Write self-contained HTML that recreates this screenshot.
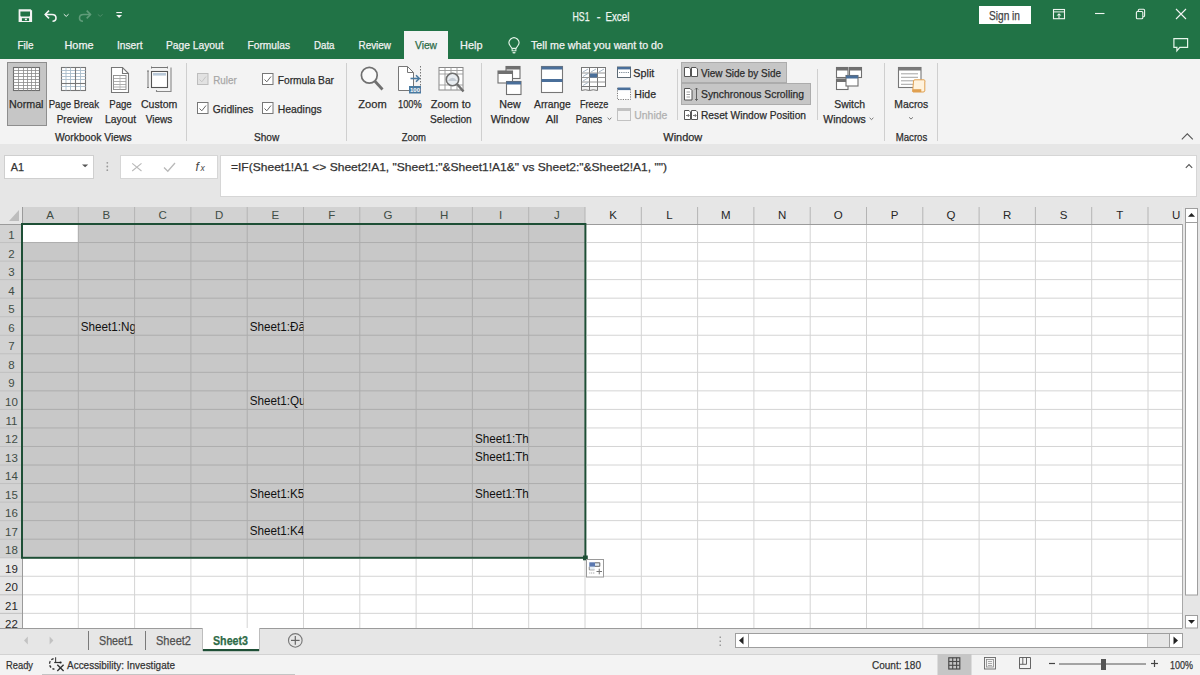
<!DOCTYPE html>
<html><head><meta charset="utf-8"><style>
html,body{margin:0;padding:0;width:1200px;height:675px;overflow:hidden;background:#f3f3f3}
svg{display:block}
text{font-family:"Liberation Sans", sans-serif}
</style></head><body>
<svg width="1200" height="675" viewBox="0 0 1200 675">
<rect x="0" y="0" width="1200" height="675" fill="#f3f3f3"/>
<rect x="0" y="0" width="1200" height="59" fill="#217346"/>
<text x="572.50" y="20.80" font-size="12" fill="#eef5f0" stroke="#eef5f0" stroke-width="0.25" textLength="17.00" lengthAdjust="spacingAndGlyphs">HS1</text>
<text x="596.80" y="20.80" font-size="12" fill="#eef5f0" stroke="#eef5f0" stroke-width="0.25" textLength="3.80" lengthAdjust="spacingAndGlyphs">-</text>
<text x="605.50" y="20.80" font-size="12" fill="#eef5f0" stroke="#eef5f0" stroke-width="0.25" textLength="23.80" lengthAdjust="spacingAndGlyphs">Excel</text>
<rect x="979" y="6" width="52" height="18" fill="#ffffff"/>
<text x="989.00" y="20.00" font-size="12" fill="#444" stroke="#444" stroke-width="0.25" textLength="31.00" lengthAdjust="spacingAndGlyphs">Sign in</text>
<text x="17.50" y="49.00" font-size="11.2" fill="#f2f2f2" stroke="#f2f2f2" stroke-width="0.25" textLength="16.00" lengthAdjust="spacingAndGlyphs">File</text>
<text x="64.50" y="49.00" font-size="11.2" fill="#f2f2f2" stroke="#f2f2f2" stroke-width="0.25" textLength="29.00" lengthAdjust="spacingAndGlyphs">Home</text>
<text x="117.00" y="49.00" font-size="11.2" fill="#f2f2f2" stroke="#f2f2f2" stroke-width="0.25" textLength="25.50" lengthAdjust="spacingAndGlyphs">Insert</text>
<text x="166.00" y="49.00" font-size="11.2" fill="#f2f2f2" stroke="#f2f2f2" stroke-width="0.25" textLength="57.50" lengthAdjust="spacingAndGlyphs">Page Layout</text>
<text x="247.50" y="49.00" font-size="11.2" fill="#f2f2f2" stroke="#f2f2f2" stroke-width="0.25" textLength="42.50" lengthAdjust="spacingAndGlyphs">Formulas</text>
<text x="314.00" y="49.00" font-size="11.2" fill="#f2f2f2" stroke="#f2f2f2" stroke-width="0.25" textLength="20.50" lengthAdjust="spacingAndGlyphs">Data</text>
<text x="358.50" y="49.00" font-size="11.2" fill="#f2f2f2" stroke="#f2f2f2" stroke-width="0.25" textLength="32.50" lengthAdjust="spacingAndGlyphs">Review</text>
<rect x="404" y="31" width="44" height="29" fill="#f3f3f3"/>
<text x="415.00" y="49.00" font-size="11.2" fill="#2b6b47" stroke="#2b6b47" stroke-width="0.25" textLength="22.00" lengthAdjust="spacingAndGlyphs">View</text>
<text x="460.00" y="49.00" font-size="11.2" fill="#f2f2f2" stroke="#f2f2f2" stroke-width="0.25" textLength="22.50" lengthAdjust="spacingAndGlyphs">Help</text>
<text x="531.00" y="49.00" font-size="11.2" fill="#f2f2f2" stroke="#f2f2f2" stroke-width="0.25" textLength="132.00" lengthAdjust="spacingAndGlyphs">Tell me what you want to do</text>
<rect x="7.5" y="62.5" width="39" height="63" fill="#c6c6c6" stroke="#8e8e8e" stroke-width="1"/>
<text x="9.00" y="108.30" font-size="11.5" fill="#2b2b2b" stroke="#2b2b2b" stroke-width="0.25" textLength="34.50" lengthAdjust="spacingAndGlyphs">Normal</text>
<text x="48.70" y="108.30" font-size="11.5" fill="#2b2b2b" stroke="#2b2b2b" stroke-width="0.25" textLength="50.30" lengthAdjust="spacingAndGlyphs">Page Break</text>
<text x="56.70" y="122.70" font-size="11.5" fill="#2b2b2b" stroke="#2b2b2b" stroke-width="0.25" textLength="35.60" lengthAdjust="spacingAndGlyphs">Preview</text>
<text x="109.30" y="108.30" font-size="11.5" fill="#2b2b2b" stroke="#2b2b2b" stroke-width="0.25" textLength="22.40" lengthAdjust="spacingAndGlyphs">Page</text>
<text x="105.00" y="122.70" font-size="11.5" fill="#2b2b2b" stroke="#2b2b2b" stroke-width="0.25" textLength="31.00" lengthAdjust="spacingAndGlyphs">Layout</text>
<text x="141.00" y="108.30" font-size="11.5" fill="#2b2b2b" stroke="#2b2b2b" stroke-width="0.25" textLength="36.30" lengthAdjust="spacingAndGlyphs">Custom</text>
<text x="145.70" y="122.70" font-size="11.5" fill="#2b2b2b" stroke="#2b2b2b" stroke-width="0.25" textLength="26.60" lengthAdjust="spacingAndGlyphs">Views</text>
<text x="55.00" y="141.00" font-size="11.5" fill="#2b2b2b" stroke="#2b2b2b" stroke-width="0.25" textLength="76.70" lengthAdjust="spacingAndGlyphs">Workbook Views</text>
<line x1="186.5" y1="63" x2="186.5" y2="141" stroke="#cfcfcf" stroke-width="1"/>
<line x1="346.5" y1="63" x2="346.5" y2="141" stroke="#cfcfcf" stroke-width="1"/>
<line x1="481.5" y1="63" x2="481.5" y2="141" stroke="#cfcfcf" stroke-width="1"/>
<line x1="677.5" y1="69" x2="677.5" y2="120" stroke="#cfcfcf" stroke-width="1"/>
<line x1="817.5" y1="69" x2="817.5" y2="120" stroke="#cfcfcf" stroke-width="1"/>
<line x1="884.5" y1="63" x2="884.5" y2="141" stroke="#cfcfcf" stroke-width="1"/>
<line x1="937.5" y1="63" x2="937.5" y2="141" stroke="#cfcfcf" stroke-width="1"/>
<text x="213.30" y="84.00" font-size="11.5" fill="#a6a6a6" stroke="#a6a6a6" stroke-width="0.25" textLength="23.40" lengthAdjust="spacingAndGlyphs">Ruler</text>
<text x="277.70" y="84.00" font-size="11.5" fill="#2b2b2b" stroke="#2b2b2b" stroke-width="0.25" textLength="56.30" lengthAdjust="spacingAndGlyphs">Formula Bar</text>
<text x="212.70" y="112.70" font-size="11.5" fill="#2b2b2b" stroke="#2b2b2b" stroke-width="0.25" textLength="40.60" lengthAdjust="spacingAndGlyphs">Gridlines</text>
<text x="277.70" y="112.70" font-size="11.5" fill="#2b2b2b" stroke="#2b2b2b" stroke-width="0.25" textLength="44.00" lengthAdjust="spacingAndGlyphs">Headings</text>
<text x="254.00" y="141.00" font-size="11.5" fill="#2b2b2b" stroke="#2b2b2b" stroke-width="0.25" textLength="25.30" lengthAdjust="spacingAndGlyphs">Show</text>
<text x="358.30" y="108.30" font-size="11.5" fill="#2b2b2b" stroke="#2b2b2b" stroke-width="0.25" textLength="28.40" lengthAdjust="spacingAndGlyphs">Zoom</text>
<text x="398.00" y="108.30" font-size="11.5" fill="#2b2b2b" stroke="#2b2b2b" stroke-width="0.25" textLength="23.70" lengthAdjust="spacingAndGlyphs">100%</text>
<text x="430.70" y="108.30" font-size="11.5" fill="#2b2b2b" stroke="#2b2b2b" stroke-width="0.25" textLength="40.30" lengthAdjust="spacingAndGlyphs">Zoom to</text>
<text x="430.00" y="122.70" font-size="11.5" fill="#2b2b2b" stroke="#2b2b2b" stroke-width="0.25" textLength="41.70" lengthAdjust="spacingAndGlyphs">Selection</text>
<text x="401.70" y="141.00" font-size="11.5" fill="#2b2b2b" stroke="#2b2b2b" stroke-width="0.25" textLength="24.30" lengthAdjust="spacingAndGlyphs">Zoom</text>
<text x="499.30" y="108.30" font-size="11.5" fill="#2b2b2b" stroke="#2b2b2b" stroke-width="0.25" textLength="21.40" lengthAdjust="spacingAndGlyphs">New</text>
<text x="490.70" y="122.70" font-size="11.5" fill="#2b2b2b" stroke="#2b2b2b" stroke-width="0.25" textLength="38.60" lengthAdjust="spacingAndGlyphs">Window</text>
<text x="534.00" y="108.30" font-size="11.5" fill="#2b2b2b" stroke="#2b2b2b" stroke-width="0.25" textLength="36.70" lengthAdjust="spacingAndGlyphs">Arrange</text>
<text x="545.70" y="122.70" font-size="11.5" fill="#2b2b2b" stroke="#2b2b2b" stroke-width="0.25" textLength="12.60" lengthAdjust="spacingAndGlyphs">All</text>
<text x="580.00" y="108.30" font-size="11.5" fill="#2b2b2b" stroke="#2b2b2b" stroke-width="0.25" textLength="28.30" lengthAdjust="spacingAndGlyphs">Freeze</text>
<text x="575.70" y="122.70" font-size="11.5" fill="#2b2b2b" stroke="#2b2b2b" stroke-width="0.25" textLength="26.60" lengthAdjust="spacingAndGlyphs">Panes</text>
<text x="633.30" y="76.70" font-size="11.5" fill="#2b2b2b" stroke="#2b2b2b" stroke-width="0.25" textLength="21.00" lengthAdjust="spacingAndGlyphs">Split</text>
<text x="634.30" y="97.70" font-size="11.5" fill="#2b2b2b" stroke="#2b2b2b" stroke-width="0.25" textLength="21.70" lengthAdjust="spacingAndGlyphs">Hide</text>
<text x="634.30" y="119.30" font-size="11.5" fill="#b0b0b0" stroke="#b0b0b0" stroke-width="0.25" textLength="33.00" lengthAdjust="spacingAndGlyphs">Unhide</text>
<rect x="681.5" y="62.5" width="105" height="20" fill="#c6c6c6" stroke="#acacac" stroke-width="1"/>
<rect x="681.5" y="83.5" width="129" height="21" fill="#c6c6c6" stroke="#acacac" stroke-width="1"/>
<text x="701.00" y="76.70" font-size="11.5" fill="#2b2b2b" stroke="#2b2b2b" stroke-width="0.25" textLength="80.00" lengthAdjust="spacingAndGlyphs">View Side by Side</text>
<text x="701.00" y="97.70" font-size="11.5" fill="#2b2b2b" stroke="#2b2b2b" stroke-width="0.25" textLength="103.00" lengthAdjust="spacingAndGlyphs">Synchronous Scrolling</text>
<text x="701.00" y="119.30" font-size="11.5" fill="#2b2b2b" stroke="#2b2b2b" stroke-width="0.25" textLength="105.00" lengthAdjust="spacingAndGlyphs">Reset Window Position</text>
<text x="663.30" y="141.00" font-size="11.5" fill="#2b2b2b" stroke="#2b2b2b" stroke-width="0.25" textLength="39.00" lengthAdjust="spacingAndGlyphs">Window</text>
<text x="834.30" y="108.30" font-size="11.5" fill="#2b2b2b" stroke="#2b2b2b" stroke-width="0.25" textLength="30.70" lengthAdjust="spacingAndGlyphs">Switch</text>
<text x="823.30" y="122.70" font-size="11.5" fill="#2b2b2b" stroke="#2b2b2b" stroke-width="0.25" textLength="42.40" lengthAdjust="spacingAndGlyphs">Windows</text>
<text x="894.30" y="108.30" font-size="11.5" fill="#2b2b2b" stroke="#2b2b2b" stroke-width="0.25" textLength="34.00" lengthAdjust="spacingAndGlyphs">Macros</text>
<text x="895.70" y="141.00" font-size="11.5" fill="#2b2b2b" stroke="#2b2b2b" stroke-width="0.25" textLength="31.60" lengthAdjust="spacingAndGlyphs">Macros</text>
<rect x="0" y="144" width="1200" height="63" fill="#e6e6e6"/>
<rect x="4.5" y="155.5" width="89" height="23" fill="#ffffff" stroke="#cfcfcf" stroke-width="1"/>
<text x="10.70" y="171.00" font-size="11.5" fill="#333" stroke="#333" stroke-width="0.25" textLength="13.30" lengthAdjust="spacingAndGlyphs">A1</text>
<rect x="120.5" y="155.5" width="97" height="23" fill="#ffffff" stroke="#d6d6d6" stroke-width="1"/>
<rect x="220.5" y="155.5" width="976" height="41" fill="#ffffff" stroke="#d6d6d6" stroke-width="1"/>
<text x="231.00" y="171.00" font-size="11.5" fill="#333" stroke="#333" stroke-width="0.25" textLength="436.00" lengthAdjust="spacingAndGlyphs">=IF(Sheet1!A1 &lt;&gt; Sheet2!A1, "Sheet1:"&amp;Sheet1!A1&amp;" vs Sheet2:"&amp;Sheet2!A1, "")</text>
<rect x="0" y="207" width="1182.5" height="17" fill="#e6e6e6"/>
<rect x="23" y="207" width="562" height="17" fill="#d2d2d2"/>
<rect x="0" y="224" width="22" height="404" fill="#e6e6e6"/>
<rect x="0" y="224" width="22" height="333" fill="#d2d2d2"/>
<rect x="22" y="224" width="1160.5" height="404" fill="#ffffff"/>
<rect x="23" y="224" width="562" height="334" fill="#c8c8c8"/>
<rect x="23" y="225" width="55" height="17.5" fill="#ffffff"/>
<line x1="78.3" y1="207" x2="78.3" y2="224" stroke="#b4b4b4" stroke-width="1"/>
<line x1="78.3" y1="224" x2="78.3" y2="557" stroke="#adadad" stroke-width="1"/>
<line x1="78.3" y1="559" x2="78.3" y2="628" stroke="#d4d4d4" stroke-width="1"/>
<line x1="134.6" y1="207" x2="134.6" y2="224" stroke="#b4b4b4" stroke-width="1"/>
<line x1="134.6" y1="224" x2="134.6" y2="557" stroke="#adadad" stroke-width="1"/>
<line x1="134.6" y1="559" x2="134.6" y2="628" stroke="#d4d4d4" stroke-width="1"/>
<line x1="190.89999999999998" y1="207" x2="190.89999999999998" y2="224" stroke="#b4b4b4" stroke-width="1"/>
<line x1="190.89999999999998" y1="224" x2="190.89999999999998" y2="557" stroke="#adadad" stroke-width="1"/>
<line x1="190.89999999999998" y1="559" x2="190.89999999999998" y2="628" stroke="#d4d4d4" stroke-width="1"/>
<line x1="247.2" y1="207" x2="247.2" y2="224" stroke="#b4b4b4" stroke-width="1"/>
<line x1="247.2" y1="224" x2="247.2" y2="557" stroke="#adadad" stroke-width="1"/>
<line x1="247.2" y1="559" x2="247.2" y2="628" stroke="#d4d4d4" stroke-width="1"/>
<line x1="303.5" y1="207" x2="303.5" y2="224" stroke="#b4b4b4" stroke-width="1"/>
<line x1="303.5" y1="224" x2="303.5" y2="557" stroke="#adadad" stroke-width="1"/>
<line x1="303.5" y1="559" x2="303.5" y2="628" stroke="#d4d4d4" stroke-width="1"/>
<line x1="359.79999999999995" y1="207" x2="359.79999999999995" y2="224" stroke="#b4b4b4" stroke-width="1"/>
<line x1="359.79999999999995" y1="224" x2="359.79999999999995" y2="557" stroke="#adadad" stroke-width="1"/>
<line x1="359.79999999999995" y1="559" x2="359.79999999999995" y2="628" stroke="#d4d4d4" stroke-width="1"/>
<line x1="416.09999999999997" y1="207" x2="416.09999999999997" y2="224" stroke="#b4b4b4" stroke-width="1"/>
<line x1="416.09999999999997" y1="224" x2="416.09999999999997" y2="557" stroke="#adadad" stroke-width="1"/>
<line x1="416.09999999999997" y1="559" x2="416.09999999999997" y2="628" stroke="#d4d4d4" stroke-width="1"/>
<line x1="472.4" y1="207" x2="472.4" y2="224" stroke="#b4b4b4" stroke-width="1"/>
<line x1="472.4" y1="224" x2="472.4" y2="557" stroke="#adadad" stroke-width="1"/>
<line x1="472.4" y1="559" x2="472.4" y2="628" stroke="#d4d4d4" stroke-width="1"/>
<line x1="528.7" y1="207" x2="528.7" y2="224" stroke="#b4b4b4" stroke-width="1"/>
<line x1="528.7" y1="224" x2="528.7" y2="557" stroke="#adadad" stroke-width="1"/>
<line x1="528.7" y1="559" x2="528.7" y2="628" stroke="#d4d4d4" stroke-width="1"/>
<line x1="585.0" y1="207" x2="585.0" y2="224" stroke="#b4b4b4" stroke-width="1"/>
<line x1="585.0" y1="224" x2="585.0" y2="628" stroke="#d4d4d4" stroke-width="1"/>
<line x1="641.3" y1="207" x2="641.3" y2="224" stroke="#b4b4b4" stroke-width="1"/>
<line x1="641.3" y1="224" x2="641.3" y2="628" stroke="#d4d4d4" stroke-width="1"/>
<line x1="697.5999999999999" y1="207" x2="697.5999999999999" y2="224" stroke="#b4b4b4" stroke-width="1"/>
<line x1="697.5999999999999" y1="224" x2="697.5999999999999" y2="628" stroke="#d4d4d4" stroke-width="1"/>
<line x1="753.9" y1="207" x2="753.9" y2="224" stroke="#b4b4b4" stroke-width="1"/>
<line x1="753.9" y1="224" x2="753.9" y2="628" stroke="#d4d4d4" stroke-width="1"/>
<line x1="810.1999999999999" y1="207" x2="810.1999999999999" y2="224" stroke="#b4b4b4" stroke-width="1"/>
<line x1="810.1999999999999" y1="224" x2="810.1999999999999" y2="628" stroke="#d4d4d4" stroke-width="1"/>
<line x1="866.5" y1="207" x2="866.5" y2="224" stroke="#b4b4b4" stroke-width="1"/>
<line x1="866.5" y1="224" x2="866.5" y2="628" stroke="#d4d4d4" stroke-width="1"/>
<line x1="922.8" y1="207" x2="922.8" y2="224" stroke="#b4b4b4" stroke-width="1"/>
<line x1="922.8" y1="224" x2="922.8" y2="628" stroke="#d4d4d4" stroke-width="1"/>
<line x1="979.0999999999999" y1="207" x2="979.0999999999999" y2="224" stroke="#b4b4b4" stroke-width="1"/>
<line x1="979.0999999999999" y1="224" x2="979.0999999999999" y2="628" stroke="#d4d4d4" stroke-width="1"/>
<line x1="1035.4" y1="207" x2="1035.4" y2="224" stroke="#b4b4b4" stroke-width="1"/>
<line x1="1035.4" y1="224" x2="1035.4" y2="628" stroke="#d4d4d4" stroke-width="1"/>
<line x1="1091.7" y1="207" x2="1091.7" y2="224" stroke="#b4b4b4" stroke-width="1"/>
<line x1="1091.7" y1="224" x2="1091.7" y2="628" stroke="#d4d4d4" stroke-width="1"/>
<line x1="1148.0" y1="207" x2="1148.0" y2="224" stroke="#b4b4b4" stroke-width="1"/>
<line x1="1148.0" y1="224" x2="1148.0" y2="628" stroke="#d4d4d4" stroke-width="1"/>
<line x1="0" y1="242.54" x2="22" y2="242.54" stroke="#c0c0c0" stroke-width="1"/>
<line x1="22" y1="242.54" x2="585" y2="242.54" stroke="#adadad" stroke-width="1"/>
<line x1="587" y1="242.54" x2="1182.5" y2="242.54" stroke="#d4d4d4" stroke-width="1"/>
<line x1="0" y1="261.08" x2="22" y2="261.08" stroke="#c0c0c0" stroke-width="1"/>
<line x1="22" y1="261.08" x2="585" y2="261.08" stroke="#adadad" stroke-width="1"/>
<line x1="587" y1="261.08" x2="1182.5" y2="261.08" stroke="#d4d4d4" stroke-width="1"/>
<line x1="0" y1="279.62" x2="22" y2="279.62" stroke="#c0c0c0" stroke-width="1"/>
<line x1="22" y1="279.62" x2="585" y2="279.62" stroke="#adadad" stroke-width="1"/>
<line x1="587" y1="279.62" x2="1182.5" y2="279.62" stroke="#d4d4d4" stroke-width="1"/>
<line x1="0" y1="298.15999999999997" x2="22" y2="298.15999999999997" stroke="#c0c0c0" stroke-width="1"/>
<line x1="22" y1="298.15999999999997" x2="585" y2="298.15999999999997" stroke="#adadad" stroke-width="1"/>
<line x1="587" y1="298.15999999999997" x2="1182.5" y2="298.15999999999997" stroke="#d4d4d4" stroke-width="1"/>
<line x1="0" y1="316.7" x2="22" y2="316.7" stroke="#c0c0c0" stroke-width="1"/>
<line x1="22" y1="316.7" x2="585" y2="316.7" stroke="#adadad" stroke-width="1"/>
<line x1="587" y1="316.7" x2="1182.5" y2="316.7" stroke="#d4d4d4" stroke-width="1"/>
<line x1="0" y1="335.24" x2="22" y2="335.24" stroke="#c0c0c0" stroke-width="1"/>
<line x1="22" y1="335.24" x2="585" y2="335.24" stroke="#adadad" stroke-width="1"/>
<line x1="587" y1="335.24" x2="1182.5" y2="335.24" stroke="#d4d4d4" stroke-width="1"/>
<line x1="0" y1="353.78" x2="22" y2="353.78" stroke="#c0c0c0" stroke-width="1"/>
<line x1="22" y1="353.78" x2="585" y2="353.78" stroke="#adadad" stroke-width="1"/>
<line x1="587" y1="353.78" x2="1182.5" y2="353.78" stroke="#d4d4d4" stroke-width="1"/>
<line x1="0" y1="372.32" x2="22" y2="372.32" stroke="#c0c0c0" stroke-width="1"/>
<line x1="22" y1="372.32" x2="585" y2="372.32" stroke="#adadad" stroke-width="1"/>
<line x1="587" y1="372.32" x2="1182.5" y2="372.32" stroke="#d4d4d4" stroke-width="1"/>
<line x1="0" y1="390.86" x2="22" y2="390.86" stroke="#c0c0c0" stroke-width="1"/>
<line x1="22" y1="390.86" x2="585" y2="390.86" stroke="#adadad" stroke-width="1"/>
<line x1="587" y1="390.86" x2="1182.5" y2="390.86" stroke="#d4d4d4" stroke-width="1"/>
<line x1="0" y1="409.4" x2="22" y2="409.4" stroke="#c0c0c0" stroke-width="1"/>
<line x1="22" y1="409.4" x2="585" y2="409.4" stroke="#adadad" stroke-width="1"/>
<line x1="587" y1="409.4" x2="1182.5" y2="409.4" stroke="#d4d4d4" stroke-width="1"/>
<line x1="0" y1="427.94" x2="22" y2="427.94" stroke="#c0c0c0" stroke-width="1"/>
<line x1="22" y1="427.94" x2="585" y2="427.94" stroke="#adadad" stroke-width="1"/>
<line x1="587" y1="427.94" x2="1182.5" y2="427.94" stroke="#d4d4d4" stroke-width="1"/>
<line x1="0" y1="446.48" x2="22" y2="446.48" stroke="#c0c0c0" stroke-width="1"/>
<line x1="22" y1="446.48" x2="585" y2="446.48" stroke="#adadad" stroke-width="1"/>
<line x1="587" y1="446.48" x2="1182.5" y2="446.48" stroke="#d4d4d4" stroke-width="1"/>
<line x1="0" y1="465.02" x2="22" y2="465.02" stroke="#c0c0c0" stroke-width="1"/>
<line x1="22" y1="465.02" x2="585" y2="465.02" stroke="#adadad" stroke-width="1"/>
<line x1="587" y1="465.02" x2="1182.5" y2="465.02" stroke="#d4d4d4" stroke-width="1"/>
<line x1="0" y1="483.56" x2="22" y2="483.56" stroke="#c0c0c0" stroke-width="1"/>
<line x1="22" y1="483.56" x2="585" y2="483.56" stroke="#adadad" stroke-width="1"/>
<line x1="587" y1="483.56" x2="1182.5" y2="483.56" stroke="#d4d4d4" stroke-width="1"/>
<line x1="0" y1="502.09999999999997" x2="22" y2="502.09999999999997" stroke="#c0c0c0" stroke-width="1"/>
<line x1="22" y1="502.09999999999997" x2="585" y2="502.09999999999997" stroke="#adadad" stroke-width="1"/>
<line x1="587" y1="502.09999999999997" x2="1182.5" y2="502.09999999999997" stroke="#d4d4d4" stroke-width="1"/>
<line x1="0" y1="520.64" x2="22" y2="520.64" stroke="#c0c0c0" stroke-width="1"/>
<line x1="22" y1="520.64" x2="585" y2="520.64" stroke="#adadad" stroke-width="1"/>
<line x1="587" y1="520.64" x2="1182.5" y2="520.64" stroke="#d4d4d4" stroke-width="1"/>
<line x1="0" y1="539.1800000000001" x2="22" y2="539.1800000000001" stroke="#c0c0c0" stroke-width="1"/>
<line x1="22" y1="539.1800000000001" x2="585" y2="539.1800000000001" stroke="#adadad" stroke-width="1"/>
<line x1="587" y1="539.1800000000001" x2="1182.5" y2="539.1800000000001" stroke="#d4d4d4" stroke-width="1"/>
<line x1="0" y1="557.72" x2="22" y2="557.72" stroke="#c0c0c0" stroke-width="1"/>
<line x1="0" y1="576.26" x2="22" y2="576.26" stroke="#c0c0c0" stroke-width="1"/>
<line x1="22" y1="576.26" x2="1182.5" y2="576.26" stroke="#d4d4d4" stroke-width="1"/>
<line x1="0" y1="594.8" x2="22" y2="594.8" stroke="#c0c0c0" stroke-width="1"/>
<line x1="22" y1="594.8" x2="1182.5" y2="594.8" stroke="#d4d4d4" stroke-width="1"/>
<line x1="0" y1="613.3399999999999" x2="22" y2="613.3399999999999" stroke="#c0c0c0" stroke-width="1"/>
<line x1="22" y1="613.3399999999999" x2="1182.5" y2="613.3399999999999" stroke="#d4d4d4" stroke-width="1"/>
<line x1="0" y1="224.5" x2="1182.5" y2="224.5" stroke="#9b9b9b" stroke-width="1"/>
<line x1="1182.5" y1="224" x2="1182.5" y2="628" stroke="#a8a8a8" stroke-width="1"/>
<line x1="22.5" y1="207" x2="22.5" y2="628" stroke="#9b9b9b" stroke-width="1"/>
<rect x="22" y="224" width="563.4" height="333.8" fill="none" stroke="#1e4f36" stroke-width="2"/>
<line x1="23" y1="224" x2="585" y2="224" stroke="#1e4f36" stroke-width="2"/>
<rect x="583" y="555.5" width="4.8" height="4.8" fill="#1e4f36"/>
<text x="50.15" y="219.3" font-size="11.5" fill="#3f4d45" text-anchor="middle">A</text>
<text x="106.45" y="219.3" font-size="11.5" fill="#3f4d45" text-anchor="middle">B</text>
<text x="162.75" y="219.3" font-size="11.5" fill="#3f4d45" text-anchor="middle">C</text>
<text x="219.05" y="219.3" font-size="11.5" fill="#3f4d45" text-anchor="middle">D</text>
<text x="275.35" y="219.3" font-size="11.5" fill="#3f4d45" text-anchor="middle">E</text>
<text x="331.65" y="219.3" font-size="11.5" fill="#3f4d45" text-anchor="middle">F</text>
<text x="387.95" y="219.3" font-size="11.5" fill="#3f4d45" text-anchor="middle">G</text>
<text x="444.25" y="219.3" font-size="11.5" fill="#3f4d45" text-anchor="middle">H</text>
<text x="500.55" y="219.3" font-size="11.5" fill="#3f4d45" text-anchor="middle">I</text>
<text x="556.85" y="219.3" font-size="11.5" fill="#3f4d45" text-anchor="middle">J</text>
<text x="613.15" y="219.3" font-size="11.5" fill="#262626" text-anchor="middle">K</text>
<text x="669.45" y="219.3" font-size="11.5" fill="#262626" text-anchor="middle">L</text>
<text x="725.75" y="219.3" font-size="11.5" fill="#262626" text-anchor="middle">M</text>
<text x="782.05" y="219.3" font-size="11.5" fill="#262626" text-anchor="middle">N</text>
<text x="838.35" y="219.3" font-size="11.5" fill="#262626" text-anchor="middle">O</text>
<text x="894.65" y="219.3" font-size="11.5" fill="#262626" text-anchor="middle">P</text>
<text x="950.95" y="219.3" font-size="11.5" fill="#262626" text-anchor="middle">Q</text>
<text x="1007.25" y="219.3" font-size="11.5" fill="#262626" text-anchor="middle">R</text>
<text x="1063.55" y="219.3" font-size="11.5" fill="#262626" text-anchor="middle">S</text>
<text x="1119.85" y="219.3" font-size="11.5" fill="#262626" text-anchor="middle">T</text>
<text x="1176.15" y="219.3" font-size="11.5" fill="#262626" text-anchor="middle">U</text>
<text x="11.5" y="239.10" font-size="11.5" fill="#3f4d45" text-anchor="middle">1</text>
<text x="11.5" y="257.64" font-size="11.5" fill="#3f4d45" text-anchor="middle">2</text>
<text x="11.5" y="276.18" font-size="11.5" fill="#3f4d45" text-anchor="middle">3</text>
<text x="11.5" y="294.72" font-size="11.5" fill="#3f4d45" text-anchor="middle">4</text>
<text x="11.5" y="313.26" font-size="11.5" fill="#3f4d45" text-anchor="middle">5</text>
<text x="11.5" y="331.80" font-size="11.5" fill="#3f4d45" text-anchor="middle">6</text>
<text x="11.5" y="350.34" font-size="11.5" fill="#3f4d45" text-anchor="middle">7</text>
<text x="11.5" y="368.88" font-size="11.5" fill="#3f4d45" text-anchor="middle">8</text>
<text x="11.5" y="387.42" font-size="11.5" fill="#3f4d45" text-anchor="middle">9</text>
<text x="11.5" y="405.96" font-size="11.5" fill="#3f4d45" text-anchor="middle">10</text>
<text x="11.5" y="424.50" font-size="11.5" fill="#3f4d45" text-anchor="middle">11</text>
<text x="11.5" y="443.04" font-size="11.5" fill="#3f4d45" text-anchor="middle">12</text>
<text x="11.5" y="461.58" font-size="11.5" fill="#3f4d45" text-anchor="middle">13</text>
<text x="11.5" y="480.12" font-size="11.5" fill="#3f4d45" text-anchor="middle">14</text>
<text x="11.5" y="498.66" font-size="11.5" fill="#3f4d45" text-anchor="middle">15</text>
<text x="11.5" y="517.20" font-size="11.5" fill="#3f4d45" text-anchor="middle">16</text>
<text x="11.5" y="535.74" font-size="11.5" fill="#3f4d45" text-anchor="middle">17</text>
<text x="11.5" y="554.28" font-size="11.5" fill="#3f4d45" text-anchor="middle">18</text>
<text x="11.5" y="572.82" font-size="11.5" fill="#262626" text-anchor="middle">19</text>
<text x="11.5" y="591.36" font-size="11.5" fill="#262626" text-anchor="middle">20</text>
<text x="11.5" y="609.90" font-size="11.5" fill="#262626" text-anchor="middle">21</text>
<text x="11.5" y="628.44" font-size="11.5" fill="#262626" text-anchor="middle">22</text>
<path d="M9,221 L19,221 L19,210 Z" fill="#bdbdbd"/>
<defs>
<clipPath id="c0"><rect x="22.00" y="224" width="56.30" height="340"/></clipPath>
<clipPath id="c1"><rect x="78.30" y="224" width="56.30" height="340"/></clipPath>
<clipPath id="c2"><rect x="134.60" y="224" width="56.30" height="340"/></clipPath>
<clipPath id="c3"><rect x="190.90" y="224" width="56.30" height="340"/></clipPath>
<clipPath id="c4"><rect x="247.20" y="224" width="56.30" height="340"/></clipPath>
<clipPath id="c5"><rect x="303.50" y="224" width="56.30" height="340"/></clipPath>
<clipPath id="c6"><rect x="359.80" y="224" width="56.30" height="340"/></clipPath>
<clipPath id="c7"><rect x="416.10" y="224" width="56.30" height="340"/></clipPath>
<clipPath id="c8"><rect x="472.40" y="224" width="56.30" height="340"/></clipPath>
<clipPath id="c9"><rect x="528.70" y="224" width="56.30" height="340"/></clipPath>
</defs>
<g clip-path="url(#c1)"><text transform="translate(80.80,331.30) scale(0.975,1)" font-size="12" fill="#111">Sheet1:Nguy</text></g>
<g clip-path="url(#c4)"><text transform="translate(249.70,331.30) scale(0.975,1)" font-size="12" fill="#111">Sheet1:Đăng</text></g>
<g clip-path="url(#c4)"><text transform="translate(249.70,405.46) scale(0.975,1)" font-size="12" fill="#111">Sheet1:Quy</text></g>
<g clip-path="url(#c8)"><text transform="translate(474.90,442.54) scale(0.975,1)" font-size="12" fill="#111">Sheet1:Th</text></g>
<g clip-path="url(#c8)"><text transform="translate(474.90,461.08) scale(0.975,1)" font-size="12" fill="#111">Sheet1:Th</text></g>
<g clip-path="url(#c4)"><text transform="translate(249.70,498.16) scale(0.975,1)" font-size="12" fill="#111">Sheet1:K5</text></g>
<g clip-path="url(#c8)"><text transform="translate(474.90,498.16) scale(0.975,1)" font-size="12" fill="#111">Sheet1:Th</text></g>
<g clip-path="url(#c4)"><text transform="translate(249.70,535.24) scale(0.975,1)" font-size="12" fill="#111">Sheet1:K4</text></g>
<rect x="0" y="628" width="1200" height="26" fill="#e6e6e6"/>
<line x1="0" y1="628.5" x2="1182.5" y2="628.5" stroke="#9b9b9b" stroke-width="1"/>
<rect x="202.5" y="628" width="57" height="23" fill="#ffffff"/>
<line x1="202.5" y1="628" x2="202.5" y2="651" stroke="#bdbdbd" stroke-width="1"/>
<line x1="259.5" y1="628" x2="259.5" y2="651" stroke="#bdbdbd" stroke-width="1"/>
<rect x="203" y="649" width="56" height="2.2" fill="#1e4f36"/>
<line x1="88.5" y1="631" x2="88.5" y2="650" stroke="#7a7a7a" stroke-width="1"/>
<line x1="145.5" y1="631" x2="145.5" y2="650" stroke="#7a7a7a" stroke-width="1"/>
<text x="99.00" y="645.00" font-size="12" fill="#505050" stroke="#505050" stroke-width="0.25" textLength="34.00" lengthAdjust="spacingAndGlyphs">Sheet1</text>
<text x="156.00" y="645.00" font-size="12" fill="#505050" stroke="#505050" stroke-width="0.25" textLength="35.00" lengthAdjust="spacingAndGlyphs">Sheet2</text>
<text x="213.00" y="645.00" font-size="12" fill="#2e6b47" stroke="#2e6b47" stroke-width="0.25" font-weight="bold" textLength="35.00" lengthAdjust="spacingAndGlyphs">Sheet3</text>
<circle cx="295.3" cy="640.4" r="6.8" fill="none" stroke="#777" stroke-width="1.1"/>
<line x1="291" y1="640.4" x2="299.6" y2="640.4" stroke="#666" stroke-width="1.2"/>
<line x1="295.3" y1="636" x2="295.3" y2="644.8" stroke="#666" stroke-width="1.2"/>
<path d="M27.8,636.6 L24,640.5 L27.8,644.4 Z" fill="#c2c2c2"/>
<path d="M49.6,636.6 L53.4,640.5 L49.6,644.4 Z" fill="#c2c2c2"/>
<rect x="719.5" y="636.5" width="1.5" height="1.5" fill="#9a9a9a"/>
<rect x="719.5" y="640.5" width="1.5" height="1.5" fill="#9a9a9a"/>
<rect x="719.5" y="644.5" width="1.5" height="1.5" fill="#9a9a9a"/>
<rect x="735.5" y="633.5" width="434" height="14" fill="#ffffff" stroke="#9e9e9e" stroke-width="1"/>
<line x1="748.5" y1="633.5" x2="748.5" y2="647.5" stroke="#9e9e9e" stroke-width="1"/>
<line x1="1147.5" y1="633.5" x2="1147.5" y2="647.5" stroke="#9e9e9e" stroke-width="1"/>
<rect x="1147.5" y="634" width="21.5" height="13" fill="#e6e6e6"/>
<rect x="1169.5" y="633.5" width="13" height="14" fill="#ffffff" stroke="#9e9e9e" stroke-width="1"/>
<path d="M739,640.5 L743.5,636.5 L743.5,644.5 Z" fill="#222"/>
<path d="M1178,640.5 L1173.5,636.5 L1173.5,644.5 Z" fill="#222"/>
<rect x="1183" y="207" width="17" height="421" fill="#e6e6e6"/>
<rect x="1185.5" y="208.5" width="12" height="14" fill="#ffffff" stroke="#9e9e9e" stroke-width="1"/>
<rect x="1185.5" y="222.5" width="12" height="372.5" fill="#ffffff" stroke="#9e9e9e" stroke-width="1"/>
<rect x="1185.5" y="615.5" width="12" height="12.5" fill="#ffffff" stroke="#9e9e9e" stroke-width="1"/>
<path d="M1191.5,213 L1195,216.8 L1188,216.8 Z" fill="#222"/>
<path d="M1191.5,623.8 L1195,620 L1188,620 Z" fill="#222"/>
<rect x="0" y="654" width="1200" height="21" fill="#f3f3f3"/>
<line x1="0" y1="654.5" x2="1200" y2="654.5" stroke="#d2d2d2" stroke-width="1"/>
<line x1="42" y1="674.5" x2="295" y2="674.5" stroke="#c4c4c4" stroke-width="1"/>
<text x="6.00" y="668.50" font-size="11.5" fill="#333" stroke="#333" stroke-width="0.25" textLength="27.00" lengthAdjust="spacingAndGlyphs">Ready</text>
<text x="67.00" y="668.50" font-size="11.5" fill="#333" stroke="#333" stroke-width="0.25" textLength="108.00" lengthAdjust="spacingAndGlyphs">Accessibility: Investigate</text>
<text x="872.00" y="668.50" font-size="11.5" fill="#333" stroke="#333" stroke-width="0.25" textLength="49.00" lengthAdjust="spacingAndGlyphs">Count: 180</text>
<rect x="937.5" y="654" width="34" height="21" fill="#c6c6c6"/>
<text x="1170.00" y="668.50" font-size="11.5" fill="#333" stroke="#333" stroke-width="0.25" textLength="23.00" lengthAdjust="spacingAndGlyphs">100%</text>
<line x1="1049" y1="663.5" x2="1055" y2="663.5" stroke="#444" stroke-width="1.2"/>
<line x1="1059" y1="664" x2="1146" y2="664" stroke="#555" stroke-width="1"/>
<rect x="1101" y="659" width="5" height="11" fill="#555"/>
<line x1="1151" y1="663.5" x2="1158" y2="663.5" stroke="#444" stroke-width="1.2"/>
<line x1="1154.5" y1="660" x2="1154.5" y2="667" stroke="#444" stroke-width="1.2"/>
<path d="M18.6,9.2 H30.6 L32.1,10.7 V22 H18.6 Z" fill="#f4f4f4"/>
<path d="M20.4,11.6 H30 V15.4 Q30,16.4 29,16.4 H21.4 Q20.4,16.4 20.4,15.4 Z" fill="#217346"/>
<rect x="21.9" y="18.2" width="7.2" height="2.8" fill="#217346"/>
<rect x="24.9" y="18.6" width="2" height="1.6" fill="#f4f4f4"/>
<path d="M45.2,14.5 H52 Q56,14.5 56,18 Q56,21.2 52.5,21.2" fill="none" stroke="#f4f4f4" stroke-width="1.6"/>
<path d="M49,10.6 L45.2,14.5 L49,18.4" fill="none" stroke="#f4f4f4" stroke-width="1.6"/>
<path d="M63.8,14.2 L66.2,16.4 L68.6,14.2" fill="none" stroke="#e8f0ea" stroke-width="1"/>
<path d="M90.5,14.5 H83.5 Q79.5,14.5 79.5,18 Q79.5,21.2 83,21.2" fill="none" stroke="#5f9c79" stroke-width="1.6"/>
<path d="M86.7,10.6 L90.5,14.5 L86.7,18.4" fill="none" stroke="#5f9c79" stroke-width="1.6"/>
<path d="M97.8,14.4 L100.2,16.4 L102.6,14.4" fill="none" stroke="#4f8c69" stroke-width="1"/>
<rect x="116.3" y="12" width="5.6" height="1.1" fill="#f4f4f4"/>
<path d="M116.2,15 H122 L119.1,18 Z" fill="#f4f4f4"/>
<rect x="1053.5" y="9.5" width="11" height="9.2" fill="none" stroke="#eef5f0" stroke-width="1.1"/>
<line x1="1053.5" y1="11.9" x2="1064.5" y2="11.9" stroke="#eef5f0" stroke-width="1"/>
<path d="M1059,13.2 L1056.6,15.6 H1061.4 Z" fill="#eef5f0"/>
<line x1="1059" y1="15.4" x2="1059" y2="18.5" stroke="#eef5f0" stroke-width="1.1"/>
<line x1="1095" y1="13.5" x2="1104.5" y2="13.5" stroke="#eef5f0" stroke-width="1.1"/>
<rect x="1136.4" y="11.5" width="6.4" height="7.2" rx="1" fill="none" stroke="#eef5f0" stroke-width="1.1"/>
<path d="M1138.3,10.9 V10.2 Q1138.3,9.2 1139.3,9.2 H1143.6 Q1144.6,9.2 1144.6,10.2 V15.6 Q1144.6,16.6 1143.6,16.6 H1143.2" fill="none" stroke="#eef5f0" stroke-width="1.1"/>
<path d="M1176,9 L1186,19 M1186,9 L1176,19" fill="none" stroke="#f4f4f4" stroke-width="1.1"/>
<path d="M1173.9,38.7 H1187.6 V47.3 H1179.8 L1176.9,50.8 V47.3 H1173.9 Z" fill="none" stroke="#e6f5ea" stroke-width="1.2" stroke-linejoin="miter"/>
<path d="M511.9,48.3 L510,45.5 A4.9,4.9 0 1 1 518,45.5 L516.1,48.3 Z" fill="none" stroke="#e6f5ea" stroke-width="1.1"/>
<rect x="512.1" y="48.6" width="3.8" height="2.2" fill="none" stroke="#e6f5ea" stroke-width="1"/>
<ellipse cx="514" cy="52.7" rx="1.7" ry="0.75" fill="#e6f5ea"/>
<rect x="13.5" y="67.5" width="26" height="23" fill="#ffffff" stroke="#6e6e6e" stroke-width="1.1"/>
<line x1="18.5" y1="67.5" x2="18.5" y2="90.5" stroke="#8a8a8a" stroke-width="0.8"/>
<line x1="23.5" y1="67.5" x2="23.5" y2="90.5" stroke="#8a8a8a" stroke-width="0.8"/>
<line x1="27.5" y1="67.5" x2="27.5" y2="90.5" stroke="#8a8a8a" stroke-width="0.8"/>
<line x1="31.5" y1="67.5" x2="31.5" y2="90.5" stroke="#8a8a8a" stroke-width="0.8"/>
<line x1="35.5" y1="67.5" x2="35.5" y2="90.5" stroke="#8a8a8a" stroke-width="0.8"/>
<line x1="13.5" y1="70.5" x2="39.5" y2="70.5" stroke="#8a8a8a" stroke-width="0.8"/>
<line x1="13.5" y1="73.5" x2="39.5" y2="73.5" stroke="#8a8a8a" stroke-width="0.8"/>
<line x1="13.5" y1="76.5" x2="39.5" y2="76.5" stroke="#8a8a8a" stroke-width="0.8"/>
<line x1="13.5" y1="79.5" x2="39.5" y2="79.5" stroke="#8a8a8a" stroke-width="0.8"/>
<line x1="13.5" y1="82.5" x2="39.5" y2="82.5" stroke="#8a8a8a" stroke-width="0.8"/>
<line x1="13.5" y1="85.5" x2="39.5" y2="85.5" stroke="#8a8a8a" stroke-width="0.8"/>
<line x1="13.5" y1="88.5" x2="39.5" y2="88.5" stroke="#8a8a8a" stroke-width="0.8"/>
<rect x="61.5" y="67.5" width="24" height="23" fill="#ffffff" stroke="#777" stroke-width="1.1"/>
<line x1="66" y1="67.5" x2="66" y2="90.5" stroke="#a9bccb" stroke-width="0.9"/>
<line x1="70.5" y1="67.5" x2="70.5" y2="90.5" stroke="#a9bccb" stroke-width="0.9"/>
<line x1="80.5" y1="67.5" x2="80.5" y2="90.5" stroke="#a9bccb" stroke-width="0.9"/>
<line x1="61.5" y1="70.5" x2="85.5" y2="70.5" stroke="#a9bccb" stroke-width="0.9"/>
<line x1="61.5" y1="73.5" x2="85.5" y2="73.5" stroke="#a9bccb" stroke-width="0.9"/>
<line x1="61.5" y1="76.5" x2="85.5" y2="76.5" stroke="#a9bccb" stroke-width="0.9"/>
<line x1="61.5" y1="79.5" x2="85.5" y2="79.5" stroke="#a9bccb" stroke-width="0.9"/>
<line x1="61.5" y1="86.5" x2="85.5" y2="86.5" stroke="#a9bccb" stroke-width="0.9"/>
<line x1="75.5" y1="67.5" x2="75.5" y2="90.5" stroke="#777" stroke-width="1.1"/>
<line x1="61.5" y1="83.5" x2="85.5" y2="83.5" stroke="#777" stroke-width="1.1"/>
<path d="M111.5,67.5 H122.5 L128.5,73.5 V92.5 H111.5 Z" fill="#ffffff" stroke="#777" stroke-width="1.1"/>
<path d="M122.5,67.5 V73.5 H128.5" fill="none" stroke="#777" stroke-width="1.1"/>
<rect x="113.5" y="75.5" width="12.5" height="14" fill="#ffffff" stroke="#8a8a8a" stroke-width="0.9"/>
<line x1="113.5" y1="78.5" x2="126" y2="78.5" stroke="#9a9a9a" stroke-width="0.8"/>
<line x1="113.5" y1="81.5" x2="126" y2="81.5" stroke="#9a9a9a" stroke-width="0.8"/>
<line x1="113.5" y1="84.5" x2="126" y2="84.5" stroke="#9a9a9a" stroke-width="0.8"/>
<line x1="113.5" y1="87" x2="126" y2="87" stroke="#9a9a9a" stroke-width="0.8"/>
<line x1="120" y1="75.5" x2="120" y2="89.5" stroke="#b0b0b0" stroke-width="0.8"/>
<rect x="151.5" y="71.5" width="16" height="16" fill="#ffffff" stroke="#555" stroke-width="1.1"/>
<rect x="153" y="73" width="13" height="2.6" fill="#b8c8d8"/>
<path d="M171,67.5 V91.5 H156.5 V90" fill="none" stroke="#888" stroke-width="1.1"/>
<line x1="148" y1="71" x2="148" y2="87.5" stroke="#777" stroke-width="1"/>
<line x1="151.5" y1="67.5" x2="167.5" y2="67.5" stroke="#777" stroke-width="1"/>
<line x1="147" y1="71" x2="149" y2="71" stroke="#777" stroke-width="1"/>
<line x1="147" y1="87.5" x2="149" y2="87.5" stroke="#777" stroke-width="1"/>
<line x1="151.5" y1="66.5" x2="151.5" y2="68.5" stroke="#777" stroke-width="1"/>
<line x1="167.5" y1="66.5" x2="167.5" y2="68.5" stroke="#777" stroke-width="1"/>
<rect x="197.5" y="73.5" width="10.5" height="11" fill="#e2e2e2" stroke="#bdbdbd" stroke-width="1"/>
<path d="M199.5,79.5 L201.8,81.8 L206,76.5" fill="none" stroke="#c6c6c6" stroke-width="1"/>
<rect x="262.5" y="73.5" width="10.5" height="11" fill="#ffffff" stroke="#777" stroke-width="1"/>
<path d="M264.5,79.5 L266.8,81.8 L271,76.5" fill="none" stroke="#666" stroke-width="1"/>
<rect x="197.5" y="102.5" width="10.5" height="11" fill="#ffffff" stroke="#777" stroke-width="1"/>
<path d="M199.5,108.5 L201.8,110.8 L206,105.5" fill="none" stroke="#666" stroke-width="1"/>
<rect x="262.5" y="102.5" width="10.5" height="11" fill="#ffffff" stroke="#777" stroke-width="1"/>
<path d="M264.5,108.5 L266.8,110.8 L271,105.5" fill="none" stroke="#666" stroke-width="1"/>
<circle cx="369.3" cy="75.3" r="7.9" fill="#fafafa" stroke="#707070" stroke-width="1.7"/>
<line x1="375" y1="81.3" x2="382.5" y2="89.5" stroke="#707070" stroke-width="2.8"/>
<path d="M398.5,66.5 H407.5 L413.5,72.5 V90.5 H398.5 Z" fill="#ffffff" stroke="#777" stroke-width="1"/>
<path d="M407.5,66.5 V72.5 H413.5" fill="none" stroke="#777" stroke-width="1"/>
<path d="M420.5,66 V86" fill="none" stroke="#777" stroke-width="1" stroke-dasharray="1.5,1.5"/>
<line x1="410.5" y1="78.5" x2="419" y2="78.5" stroke="#4a7aa0" stroke-width="1.6"/>
<path d="M416,75.3 L419.3,78.5 L416,81.7" fill="none" stroke="#4a7aa0" stroke-width="1.6"/>
<rect x="409" y="86" width="12" height="7.5" fill="#4a7aa0"/>
<text x="415" y="92.3" font-size="6" fill="#fff" text-anchor="middle" font-weight="bold">100</text>
<rect x="439" y="67.5" width="24" height="22.5" fill="#ffffff" stroke="#888" stroke-width="1"/>
<line x1="445" y1="67.5" x2="445" y2="90" stroke="#999" stroke-width="0.9"/>
<line x1="451" y1="67.5" x2="451" y2="90" stroke="#999" stroke-width="0.9"/>
<line x1="457" y1="67.5" x2="457" y2="90" stroke="#999" stroke-width="0.9"/>
<line x1="439" y1="70.5" x2="463" y2="70.5" stroke="#999" stroke-width="0.9"/>
<line x1="439" y1="74" x2="463" y2="74" stroke="#999" stroke-width="0.9"/>
<line x1="439" y1="85" x2="463" y2="85" stroke="#999" stroke-width="0.9"/>
<circle cx="452.5" cy="79.5" r="6.2" fill="#e9edf1" stroke="#707070" stroke-width="1.6"/>
<path d="M448,81 Q452.5,74.5 457,81 Z" fill="#c5ccd4"/>
<line x1="457" y1="84" x2="463.5" y2="91.5" stroke="#707070" stroke-width="2.5"/>
<rect x="506" y="66.5" width="14" height="12" fill="#ffffff" stroke="#6f6f6f" stroke-width="1.1"/>
<rect x="506" y="66.5" width="14" height="3" fill="#707070"/>
<rect x="498" y="71" width="14.5" height="12" fill="#ffffff" stroke="#6f6f6f" stroke-width="1.1"/>
<rect x="498" y="71" width="14.5" height="3" fill="#707070"/>
<rect x="506.5" y="81.5" width="14.5" height="13" fill="#ffffff" stroke="#6f6f6f" stroke-width="1.1"/>
<rect x="506.5" y="81.5" width="14.5" height="3" fill="#4a6f9a"/>
<rect x="541.5" y="66.5" width="21" height="26" fill="#ffffff" stroke="#777" stroke-width="1.1"/>
<rect x="541.5" y="66.5" width="21" height="3" fill="#4a6f9a"/>
<rect x="541.5" y="79" width="21" height="3" fill="#4a6f9a"/>
<rect x="581.5" y="67.5" width="24" height="19" fill="#ffffff" stroke="#777" stroke-width="1"/>
<line x1="589.5" y1="67.5" x2="589.5" y2="86.5" stroke="#777" stroke-width="1"/>
<line x1="597.5" y1="67.5" x2="597.5" y2="86.5" stroke="#777" stroke-width="1"/>
<line x1="581.5" y1="73" x2="605.5" y2="73" stroke="#8a8a8a" stroke-width="0.9"/>
<line x1="581.5" y1="77.5" x2="605.5" y2="77.5" stroke="#8a8a8a" stroke-width="0.9"/>
<line x1="581.5" y1="82" x2="605.5" y2="82" stroke="#8a8a8a" stroke-width="0.9"/>
<rect x="590" y="73.5" width="7" height="4" fill="#4a6f9a"/>
<path d="M581.5,86.5 V90.5 Q585,89 589.5,90.5 V86.5 M589.5,90.5 Q593,89 597.5,90.5 V86.5" fill="none" stroke="#777" stroke-width="1"/>
<line x1="583" y1="72" x2="588" y2="69" stroke="#9fb0c0" stroke-width="0.9"/>
<line x1="591" y1="72" x2="596" y2="69" stroke="#9fb0c0" stroke-width="0.9"/>
<line x1="599" y1="72" x2="604" y2="69" stroke="#9fb0c0" stroke-width="0.9"/>
<line x1="583" y1="76.5" x2="588" y2="73.5" stroke="#9fb0c0" stroke-width="0.9"/>
<line x1="583" y1="81" x2="588" y2="78" stroke="#9fb0c0" stroke-width="0.9"/>
<line x1="583" y1="85.5" x2="588" y2="82.5" stroke="#9fb0c0" stroke-width="0.9"/>
<rect x="617.5" y="67" width="13" height="10.5" fill="#ffffff" stroke="#5d6a74" stroke-width="1"/>
<rect x="617.5" y="67" width="13" height="2.4" fill="#4a6f9a"/>
<path d="M619,72.5 H629" stroke="#6a7a88" stroke-width="0.9" stroke-dasharray="1.2,1"/>
<rect x="617.5" y="87.5" width="13" height="12" fill="#ffffff"/>
<rect x="617.5" y="87.5" width="13" height="2.6" fill="#4a6f9a"/>
<path d="M617.5,88 V99.5 H630.5 V88" fill="none" stroke="#6f6f6f" stroke-width="0.9" stroke-dasharray="1.2,1.2"/>
<rect x="617.5" y="108.5" width="13" height="12" fill="#f3f3f3" stroke="#c2c2c2" stroke-width="1"/>
<rect x="617.5" y="108.5" width="13" height="2.5" fill="#c2c2c2"/>
<path d="M684.5,67.5 H689 L690.5,69 V76.5 H684.5 Z M691.5,67.5 H696 L697.5,69 V76.5 H691.5 Z" fill="#ffffff" stroke="#555" stroke-width="1"/>
<path d="M684.5,88.5 H690 L692,90.5 V100 H684.5 Z" fill="#ffffff" stroke="#555" stroke-width="1"/>
<line x1="686.5" y1="92" x2="690" y2="92" stroke="#888" stroke-width="0.8"/>
<line x1="686.5" y1="94.5" x2="690" y2="94.5" stroke="#888" stroke-width="0.8"/>
<line x1="686.5" y1="97" x2="690" y2="97" stroke="#888" stroke-width="0.8"/>
<line x1="696.5" y1="88" x2="696.5" y2="100.5" stroke="#555" stroke-width="0.9"/>
<path d="M695,89.5 L696.5,88 L698,89.5 M695,99 L696.5,100.5 L698,99" fill="none" stroke="#555" stroke-width="0.8"/>
<path d="M684.5,110.5 H689 L690.5,112 V119.5 H684.5 Z M691.5,110.5 H696 L697.5,112 V119.5 H691.5 Z" fill="#ffffff" stroke="#555" stroke-width="1"/>
<path d="M686,115.5 H689 M687.8,114 L689.3,115.5 L687.8,117 M693,115.5 H696 M694.8,114 L696.3,115.5 L694.8,117" fill="none" stroke="#555" stroke-width="0.8"/>
<rect x="836.5" y="67.5" width="11.5" height="10" fill="#ffffff" stroke="#6f6f6f" stroke-width="1.1"/>
<rect x="836.5" y="67.5" width="11.5" height="3" fill="#707070"/>
<rect x="849.5" y="67.5" width="12" height="10" fill="#ffffff" stroke="#6f6f6f" stroke-width="1.1"/>
<rect x="849.5" y="67.5" width="12" height="3" fill="#707070"/>
<rect x="836.5" y="79" width="11.5" height="10.5" fill="#ffffff" stroke="#6f6f6f" stroke-width="1.1"/>
<rect x="836.5" y="79" width="11.5" height="3" fill="#707070"/>
<rect x="846" y="75.5" width="12" height="10.5" fill="#ffffff" stroke="#6f6f6f" stroke-width="1.1"/>
<rect x="846" y="75.5" width="12" height="3" fill="#4a6f9a"/>
<rect x="898.5" y="67.5" width="22.5" height="20" fill="#ffffff" stroke="#777" stroke-width="1.1"/>
<rect x="898.5" y="67.5" width="22.5" height="3" fill="#7a7a7a"/>
<line x1="901" y1="73.8" x2="918" y2="73.8" stroke="#8c8c8c" stroke-width="0.8"/>
<line x1="901" y1="77.3" x2="918" y2="77.3" stroke="#8c8c8c" stroke-width="0.8"/>
<line x1="901" y1="80.8" x2="918" y2="80.8" stroke="#8c8c8c" stroke-width="0.8"/>
<line x1="901" y1="84.3" x2="918" y2="84.3" stroke="#8c8c8c" stroke-width="0.8"/>
<path d="M913.5,81 Q913.5,79.8 915,79.8 H924 Q925.8,80.5 924.8,82 V91 Q924.5,92 923,92 H913 Q912,91.5 912.8,90 Z" fill="#fff3de" stroke="#e0a050" stroke-width="1"/>
<rect x="912.8" y="89.2" width="8.5" height="2.8" fill="#e0a050"/>
<path d="M607.6,117.8 L609.5,119.6 L611.4,117.8" fill="none" stroke="#666" stroke-width="0.9"/>
<path d="M869.6,117.8 L871.5,119.6 L873.4,117.8" fill="none" stroke="#666" stroke-width="0.9"/>
<path d="M909.1,117.3 L911,119.1 L912.9,117.3" fill="none" stroke="#666" stroke-width="0.9"/>
<path d="M1181.8,139.4 L1187.3,133.9 L1192.8,139.4" fill="none" stroke="#555" stroke-width="1.1"/>
<path d="M82,164.5 H88.2 L85.1,167.2 Z" fill="#555"/>
<circle cx="107.3" cy="162.8" r="0.9" fill="#9a9a9a"/>
<circle cx="107.3" cy="166.5" r="0.9" fill="#9a9a9a"/>
<circle cx="107.3" cy="170.2" r="0.9" fill="#9a9a9a"/>
<path d="M132.2,163.3 L141.5,171 M141.5,163.3 L132.2,171" fill="none" stroke="#b9b9b9" stroke-width="1.1"/>
<path d="M164,167.5 L167.8,171.3 L175,163" fill="none" stroke="#b9b9b9" stroke-width="1.3"/>
<text x="195.5" y="171" font-size="12" fill="#444" font-style="italic" font-family="Liberation Serif">f</text>
<text x="200.5" y="171" font-size="8.5" fill="#444" font-style="italic" font-family="Liberation Serif">x</text>
<path d="M1185.8,167.8 L1189,164.6 L1192.2,167.8" fill="none" stroke="#555" stroke-width="1.1"/>
<rect x="586.5" y="559.5" width="17" height="17.5" fill="#ffffff" stroke="#9a9a9a" stroke-width="1"/>
<rect x="589.3" y="562.3" width="5.7" height="4.5" fill="#5a78b0"/>
<path d="M595,562.8 H599.8 V566.3 H595" fill="#e4eef6" stroke="#555" stroke-width="0.9"/>
<path d="M589.3,566.8 V569.8 H594.5" fill="none" stroke="#666" stroke-width="0.9"/>
<rect x="589.8" y="566.8" width="4.8" height="2.8" fill="#e4eef6"/>
<path d="M589.3,573 H595" fill="none" stroke="#888" stroke-width="0.8" stroke-dasharray="1,0.8"/>
<path d="M596.5,571.5 H602 M599.25,568.7 V574.3" fill="none" stroke="#777" stroke-width="1"/>
<path d="M53.6,658.6 A5.4,5.4 0 0 0 54.5,669.2" fill="none" stroke="#333" stroke-width="1.3" stroke-dasharray="2.6,1.6"/>
<line x1="55.6" y1="657.2" x2="55.6" y2="662.6" stroke="#444" stroke-width="1.1"/>
<line x1="54.2" y1="662.5" x2="60.5" y2="662.5" stroke="#333" stroke-width="1.2"/>
<circle cx="60.6" cy="662.5" r="1.1" fill="#222"/>
<path d="M57.3,664.8 L63.6,671 M57.3,671 L63.6,664.8" fill="none" stroke="#333" stroke-width="1.4"/>
<rect x="948.8" y="657.8" width="11" height="11.2" fill="none" stroke="#4a4a4a" stroke-width="1.2"/>
<line x1="952.7" y1="657.8" x2="952.7" y2="669" stroke="#4a4a4a" stroke-width="1.1"/>
<line x1="956.6" y1="657.8" x2="956.6" y2="669" stroke="#4a4a4a" stroke-width="1.1"/>
<line x1="948.8" y1="661.5" x2="959.8" y2="661.5" stroke="#4a4a4a" stroke-width="1.1"/>
<line x1="948.8" y1="665.3" x2="959.8" y2="665.3" stroke="#4a4a4a" stroke-width="1.1"/>
<rect x="984.5" y="657.5" width="11" height="11.5" fill="none" stroke="#666" stroke-width="0.9"/>
<rect x="986.5" y="659.5" width="7" height="7.5" fill="none" stroke="#888" stroke-width="0.8"/>
<line x1="988" y1="661.5" x2="992" y2="661.5" stroke="#888" stroke-width="0.7"/>
<line x1="988" y1="663.5" x2="992" y2="663.5" stroke="#888" stroke-width="0.7"/>
<line x1="988" y1="665.5" x2="992" y2="665.5" stroke="#888" stroke-width="0.7"/>
<path d="M1019.5,657.5 H1030.5 V668.5 H1019.5 Z M1019.5,664.3 H1026.5 V657.5 M1022.8,657.5 V664.3" fill="none" stroke="#555" stroke-width="0.9"/>
<line x1="1019.5" y1="668.6" x2="1030.5" y2="668.6" stroke="#666" stroke-width="1"/>
</svg>
</body></html>
